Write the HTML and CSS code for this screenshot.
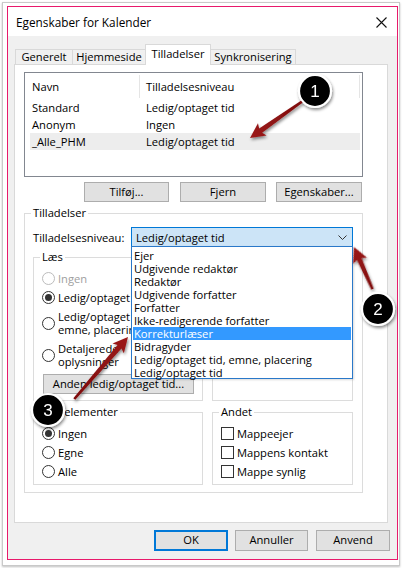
FILE: index.html
```html
<!DOCTYPE html>
<html lang="da">
<head>
<meta charset="utf-8">
<title>Egenskaber for Kalender</title>
<link rel="stylesheet" href="styles.css">
</head>
<body>
<div class="frame">
  <div class="window">
    <div class="titlebar">
      <span class="title">Egenskaber for Kalender</span>
      <svg class="close" width="11" height="11" viewBox="0 0 11 11"><path d="M0.5 0.5 L10.5 10.5 M10.5 0.5 L0.5 10.5" stroke="#111" stroke-width="1.1" fill="none"/></svg>
    </div>
    <div class="wbody">
      <div class="tabs">
        <div class="tab t1">Generelt</div>
        <div class="tab t2">Hjemmeside</div>
        <div class="tab t3 active">Tilladelser</div>
        <div class="tab t4">Synkronisering</div>
      </div>
      <div class="panel">
        <div class="listbox">
          <div class="lhead">
            <div class="hc1">Navn</div>
            <div class="hc2">Tilladelsesniveau</div>
          </div>
          <div class="lrow"><span class="c1">Standard</span><span class="c2">Ledig/optaget tid</span></div>
          <div class="lrow"><span class="c1">Anonym</span><span class="c2">Ingen</span></div>
          <div class="lrow sel"><span class="c1">_Alle_PHM</span><span class="c2">Ledig/optaget tid</span></div>
        </div>
        <div class="btnrow">
          <div class="btn b-add">Tilføj...</div>
          <div class="btn b-rem">Fjern</div>
          <div class="btn b-prop">Egenskaber...</div>
        </div>
        <fieldset class="group main">
          <legend>Tilladelser</legend>
          <div class="levelrow">
            <div class="lvlabel">Tilladelsesniveau:</div>
            <div class="combo">
              <span>Ledig/optaget tid</span>
              <svg class="chev" width="9" height="5" viewBox="0 0 9 5"><path d="M0.5 0.5 L4.5 4.5 L8.5 0.5" stroke="#333" stroke-width="1" fill="none"/></svg>
            </div>
          </div>
          <div class="subgrid">
            <fieldset class="group sub read">
              <legend>Læs</legend>
              <div class="opt disabled"><span class="radio"></span><span class="lbl">Ingen</span></div>
              <div class="opt"><span class="radio on"></span><span class="lbl">Ledig/optaget tid</span></div>
              <div class="opt"><span class="radio"></span><span class="lbl">Ledig/optaget tid,<br>emne, placering</span></div>
              <div class="opt"><span class="radio"></span><span class="lbl">Detaljerede<br>oplysninger</span></div>
              <div class="btn b-other">Anden ledig/optaget tid...</div>
            </fieldset>
            <fieldset class="group sub">
              <legend>Skriv</legend>
            </fieldset>
            <fieldset class="group sub">
              <legend>Slet elementer</legend>
              <div class="opt"><span class="radio on"></span><span class="lbl">Ingen</span></div>
              <div class="opt"><span class="radio"></span><span class="lbl">Egne</span></div>
              <div class="opt"><span class="radio"></span><span class="lbl">Alle</span></div>
            </fieldset>
            <fieldset class="group sub">
              <legend>Andet</legend>
              <div class="opt"><span class="check"></span><span class="lbl">Mappeejer</span></div>
              <div class="opt"><span class="check"></span><span class="lbl">Mappens kontakt</span></div>
              <div class="opt"><span class="check"></span><span class="lbl">Mappe synlig</span></div>
            </fieldset>
          </div>
        </fieldset>
      </div>
      <div class="footer">
        <div class="btn b-ok">OK</div>
        <div class="btn b-cancel">Annuller</div>
        <div class="btn b-apply">Anvend</div>
      </div>
    </div>
  </div>
</div>

<div class="dropdown">
  <div class="item">Ejer</div>
  <div class="item">Udgivende redaktør</div>
  <div class="item">Redaktør</div>
  <div class="item">Udgivende forfatter</div>
  <div class="item">Forfatter</div>
  <div class="item">Ikke-redigerende forfatter</div>
  <div class="item hl">Korrekturlæser</div>
  <div class="item">Bidragyder</div>
  <div class="item">Ledig/optaget tid, emne, placering</div>
  <div class="item">Ledig/optaget tid</div>
</div>

<svg class="callouts" width="404" height="568" viewBox="0 0 404 568">
  <defs>
    <filter id="sh" x="-50%" y="-50%" width="200%" height="200%">
      <feDropShadow dx="1" dy="2" stdDeviation="1.6" flood-color="#000" flood-opacity="0.45"/>
    </filter>
    <linearGradient id="ar" x1="0" y1="0" x2="1" y2="0">
      <stop offset="0" stop-color="#7e0c0c"/>
      <stop offset="1" stop-color="#9c1a1a"/>
    </linearGradient>
  </defs>
  <g filter="url(#sh)">
    <g transform="translate(250 138) rotate(145)">
      <polygon points="-64,-1.3 -13,-2.6 -15,-7.5 0,0 -15,7.5 -13,2.6 -64,1.3" fill="url(#ar)"/>
    </g>
    <g transform="translate(354 247) rotate(-113.7)">
      <polygon points="-46,-1.3 -13,-2.6 -15,-7.5 0,0 -15,7.5 -13,2.6 -46,1.3" fill="url(#ar)"/>
    </g>
    <g transform="translate(128 337) rotate(-49.1)">
      <polygon points="-82,-1.3 -13,-2.6 -15,-7.5 0,0 -15,7.5 -13,2.6 -82,1.3" fill="url(#ar)"/>
    </g>
    <circle cx="315" cy="91" r="16" fill="#000" stroke="#fff" stroke-width="2.2"/>
    <circle cx="378" cy="309" r="16" fill="#000" stroke="#fff" stroke-width="2.2"/>
    <circle cx="48" cy="410" r="16" fill="#000" stroke="#fff" stroke-width="2.2"/>
  </g>
  <text x="315" y="97" class="num">1</text>
  <text x="378" y="315" class="num">2</text>
  <text x="48" y="416" class="num">3</text>
</svg>
</body>
</html>
```

FILE: styles.css
```css
* { box-sizing: border-box; }
html, body { margin: 0; padding: 0; }
body {
  width: 404px;
  height: 568px;
  position: relative;
  overflow: hidden;
  background: #ffffff;
  font-family: "Open Sans", "Noto Sans", sans-serif;
  font-size: 11.2px;
  color: #000;
}

.frame {
  margin: 2px 0 0 2px;
  width: 398px;
  height: 564px;
  border: 1px solid #c9c9c9;
  padding: 3px 1px 5px 4px;
  background: #fff;
  box-shadow: 0 1px 2px rgba(0,0,0,0.25);
}

.window {
  width: 391px;
  height: 554px;
  border: 1px solid #e8196b;
  display: flex;
  flex-direction: column;
}

.titlebar {
  height: 29px;
  background: #fff;
  display: flex;
  align-items: center;
  justify-content: space-between;
  padding: 0 10px 0 8px;
}
.title { font-size: 11.8px; line-height: 16px; }
.close { display: block; margin-top: 1px; }

.wbody {
  flex: 1;
  background: #f0f0f0;
  padding: 8px 0 0 6px;
}

.tabs {
  display: flex;
  align-items: flex-end;
  height: 20px;
  padding-left: 1px;
  position: relative;
  z-index: 2;
}
.tab {
  height: 15px;
  border: 1px solid #d9d9d9;
  border-bottom: 0;
  background: #f0f0f0;
  text-align: center;
  line-height: 13px;
}
.t1 { width: 58px; }
.t2 { width: 74px; margin-left: -1px; }
.t3 { width: 66px; margin-left: -1px; }
.t4 { width: 86px; margin-left: -1px; }
.tab.active {
  height: 21px;
  margin-bottom: -1px;
  background: #fff;
  line-height: 17px;
  position: relative;
  z-index: 1;
}

.panel {
  width: 374px;
  height: 459px;
  border: 1px solid #d9d9d9;
  background: #fff;
  padding: 7px 0 0 9px;
}

.listbox {
  width: 339px;
  height: 105px;
  border: 1px solid #828790;
  padding: 0 2px 0 5px;
  background: #fff;
}
.lhead {
  display: flex;
  align-items: center;
  height: 26px;
}
.hc1 {
  width: 110px;
  height: 23px;
  line-height: 23px;
  padding-left: 2px;
  border-right: 1px solid #e5e5e5;
}
.hc2 {
  width: 220px;
  height: 23px;
  line-height: 23px;
  padding-left: 6px;
  border-right: 1px solid #e5e5e5;
}
.lrow {
  display: flex;
  align-items: center;
  height: 17px;
  width: 330px;
}
.lrow.sel { background: #ededed; }
.c1 { width: 116px; padding-left: 2px; }

.btnrow {
  width: 339px;
  display: flex;
  justify-content: flex-end;
  margin-top: 5px;
  padding-right: 1px;
}
.btn {
  height: 20px;
  background: #e1e1e1;
  border: 1px solid #adadad;
  text-align: center;
  line-height: 17px;
  white-space: nowrap;
}
.b-add { width: 85px; margin-right: 11px; }
.b-rem { width: 86px; margin-right: 10px; }
.b-prop { width: 86px; }

.group {
  margin: 0;
  min-width: 0;
  border: 1px solid #dcdcdc;
}
.group legend {
  padding: 0 2px;
  margin-left: -2px;
  line-height: 16px;
}
.main {
  width: 339px;
  margin-top: 3px;
  padding: 6px 9px 7px 8px;
}

.levelrow {
  display: flex;
  align-items: center;
  height: 20px;
}
.lvlabel { width: 98px; }
.combo {
  width: 222px;
  height: 20px;
  border: 1px solid #0078d7;
  background: #cce4f7;
  display: flex;
  align-items: center;
  justify-content: space-between;
  padding: 0 4px 0 4px;
}
.chev { display: block; margin-right: 1px; }

.subgrid {
  margin-top: 2px;
  display: grid;
  grid-template-columns: 170px 141px;
  column-gap: 9px;
  row-gap: 3px;
}
.sub {
  padding: 7px 8px 6px 8px;
  display: flex;
  flex-direction: column;
  gap: 6px;
}

.opt {
  display: flex;
  align-items: center;
  line-height: 13px;
  white-space: nowrap;
}
.lbl { margin-left: 3px; }
.opt.disabled .lbl { color: #a0a0a0; }

.radio {
  flex: none;
  width: 13px;
  height: 13px;
  border: 1px solid #333;
  border-radius: 50%;
  background: #fff;
  display: flex;
  align-items: center;
  justify-content: center;
}
.radio.on::after {
  content: "";
  width: 7px;
  height: 7px;
  border-radius: 50%;
  background: #333;
}
.opt.disabled .radio { border-color: #bcbcbc; }

.check {
  flex: none;
  width: 13px;
  height: 13px;
  border: 1px solid #333;
  background: #fff;
}

.b-other {
  width: 151px;
  margin-left: 1px;
  margin-top: 0;
}

.footer {
  display: flex;
  justify-content: flex-end;
  margin-top: 7px;
  padding-right: 7px;
}
.footer .btn { height: 21px; line-height: 18px; }
.b-ok { width: 74px; margin-right: 7px; border: 2px solid #0078d7; line-height: 16px !important; }
.b-cancel { width: 73px; margin-right: 8px; }
.b-apply { width: 74px; }

.dropdown {
  position: absolute;
  left: 131px;
  top: 246px;
  width: 222px;
  height: 133px;
  background: #fff;
  border: 1px solid #2a78c9;
  padding: 2px 1px 0 1px;
  box-shadow: 1px 1px 2px rgba(0,0,0,0.15);
  z-index: 5;
}
.dropdown .item {
  height: 13px;
  line-height: 13px;
  padding-left: 1px;
  white-space: nowrap;
}
.dropdown .item.hl { background: #3399ff; color: #fff; }

.callouts {
  position: absolute;
  left: 0;
  top: 0;
  z-index: 10;
  pointer-events: none;
}
.num {
  font-family: "Liberation Sans", Arial, sans-serif;
  font-size: 17px;
  fill: #fff;
  text-anchor: middle;
}
```
